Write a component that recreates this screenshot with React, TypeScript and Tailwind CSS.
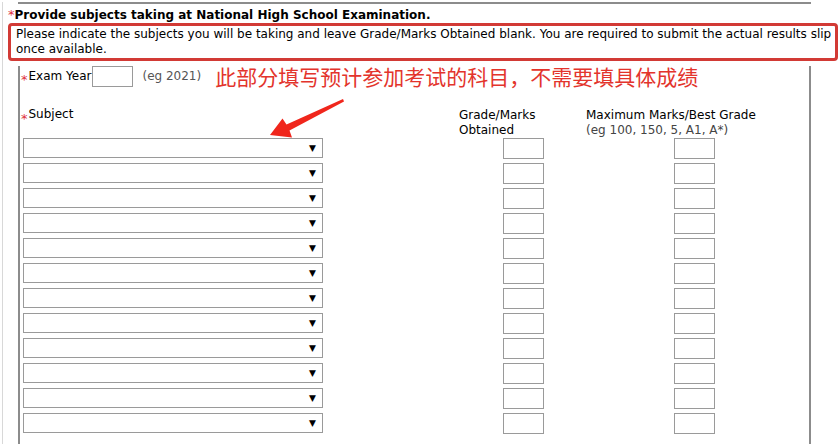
import React from "react";

const rows = Array.from({ length: 12 }, (_, i) => i);

function Star() {
  return (
    <span className="inline-block translate-y-[3px] text-[13px] leading-[15px] text-[#e0303a]">*</span>
  );
}

export default function App() {
  return (
    <div className="relative h-[444px] w-[840px] overflow-hidden bg-white font-['DejaVu_Sans',Verdana,sans-serif] text-[12px] leading-[15px] text-black">
      <div className="ml-[2px] h-full border-l border-[#d8d8d8]">
        {/* bottom border of previous box */}
        <div className="ml-[15px] mt-[2px] h-[2px] w-[793px] bg-[#8c8c8c]" />

        {/* title */}
        <div className="ml-[5px] mt-[2px] flex h-[17px] items-center text-[12px] leading-[16px]">
          <span className="text-[13px] font-normal text-[#e0303a]">*</span>
          <span className="font-bold">Provide subjects taking at National High School Examination.</span>
        </div>

        {/* red highlighted instruction */}
        <div className="relative z-10 ml-[5px] w-[830px] rounded-[4px] border-[3px] border-[#d23a35] bg-white pb-[1px] pl-[5px] pt-[1px] text-[12px] leading-[15px]">
          Please indicate the subjects you will be taking and leave Grade/Marks Obtained blank. You are required to submit the actual results slip once available.
        </div>

        {/* inner box */}
        <div className="ml-[15px] h-[400px] w-[793px] border-x-2 border-[#8c8c8c] pl-[1px]">
          <div className="mt-[5px] flex h-[20px] items-center">
            <Star />
            <span className="ml-[1px]">Exam Year</span>
            <div className="ml-[1px] h-[21px] w-[41px] border border-[#9a9a9a] bg-white" />
            <span className="ml-[9px] text-[#555]">(eg 2021)</span>
            <span className="ml-[14px] font-['Noto_Sans_CJK_SC',sans-serif] text-[21px] leading-[24px] text-[#e3342c]">
              此部分填写预计参加考试的科目，不需要填具体成绩
            </span>
          </div>

          <div className="mt-[22px] flex h-[30px]">
            <div className="flex w-[438px] items-start">
              <Star />
              <span className="ml-[1px] -mt-[1px]">Subject</span>
            </div>
            <div className="w-[127px]">
              Grade/Marks
              <br />
              Obtained
            </div>
            <div>
              Maximum Marks/Best Grade
              <br />
              <span className="text-[#444]">(eg 100, 150, 5, A1, A*)</span>
            </div>
          </div>

          <div className="flex flex-col gap-[5px]">
            {rows.map((r) => (
              <div key={r} className="flex h-[20px] items-center">
                <div className="ml-[2px] flex h-[20px] w-[300px] items-center justify-end border border-[#9a9a9a] bg-white pr-[6px]">
                  <span className="text-[9px] leading-none">▼</span>
                </div>
                <div className="ml-[180px] h-[21px] w-[41px] border border-[#9a9a9a] bg-white" />
                <div className="ml-[130px] h-[21px] w-[41px] border border-[#9a9a9a] bg-white" />
              </div>
            ))}
          </div>
        </div>
      </div>

      {/* annotation arrow */}
      <svg className="pointer-events-none absolute left-0 top-0" width="840" height="444" viewBox="0 0 840 444">
        <polygon
          points="270,135 292,137.5 289.5,130.5 344,101.5 343,99 286.5,124.5 282.5,118.5"
          fill="#f0261c"
        />
      </svg>
    </div>
  );
}
